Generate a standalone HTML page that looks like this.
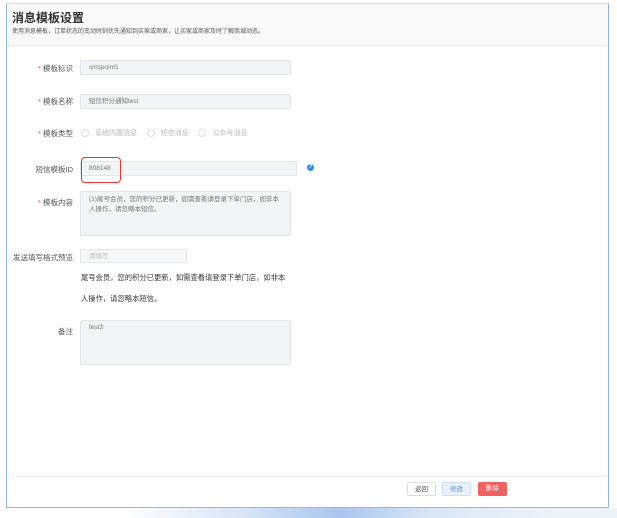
<!DOCTYPE html><html><head><meta charset="utf-8"><style>
body{margin:0;width:617px;height:518px;background:#fff;position:relative;overflow:hidden;font-family:"Liberation Sans","Noto Sans CJK SC",sans-serif;color:#333}
.a{position:absolute}
.frame{left:6px;top:3px;width:601px;height:503px;border:1.5px solid #8fb6e6;border-top:1px solid #cfe0f3}
.hdr{left:7px;top:4px;width:601px;height:41px;background:#fafafa;border-bottom:1px solid #eee}
.lbl{font-size:7.5px;color:#555;text-align:right;width:73px;left:0}
.lbl i{color:#e55;font-style:normal}
.in{background:#f3f4f6;border:1px solid #e3e5ea;border-radius:2px;font-size:6.5px;color:#777;box-sizing:border-box;padding:0 0 0 8px}
.btn{top:482px;height:14px;width:29px;font-size:6.5px;text-align:center;line-height:14px;border-radius:2px;box-sizing:border-box}
.r{display:inline-block;width:6px;height:6px;border:1px solid #ddd;border-radius:50%;vertical-align:middle;margin-right:6px}
</style></head><body>
<div class="a" style="left:0;top:508px;width:617px;height:10px;background:linear-gradient(90deg,#fff 20%,#d6e4f6 40%,#a9c6ee 55%,#dbe7f6 70%,#eef3fa 90%)"></div>
<div class="a frame"></div>
<div class="a hdr"></div>
<div class="a" style="left:12px;top:9px;font-size:12px;font-weight:bold;color:#333">消息模板设置</div>
<div class="a" style="left:12px;top:26px;font-size:6px;color:#555">使用消息模板，订单状态的变动时刻优先通知到买家或商家，让买家或商家及时了解商城动态。</div>

<div class="a lbl" style="top:63px"><i>* </i>模板标识</div>
<div class="a in" style="left:80px;top:60px;width:211px;height:15px;line-height:14px">smspoint1</div>
<div class="a lbl" style="top:96px"><i>* </i>模板名称</div>
<div class="a in" style="left:80px;top:94px;width:211px;height:15px;line-height:14px">短信积分通知test</div>
<div class="a lbl" style="top:128px"><i>* </i>模板类型</div>
<div class="a" style="left:81px;top:128px;font-size:7px;color:#bbb"><span class="r"></span>系统内置消息&nbsp;&nbsp;&nbsp;&nbsp;&nbsp;<span class="r"></span>短信消息&nbsp;&nbsp;&nbsp;&nbsp;&nbsp;<span class="r"></span>公众号消息</div>
<div class="a lbl" style="top:164px">短信模板ID</div>
<div class="a in" style="left:80px;top:161px;width:217px;height:15px;line-height:14px">808148</div>
<div class="a" style="left:81px;top:157px;width:38px;height:24px;border:1px solid #e33;border-radius:4px"></div>
<div class="a" style="left:307px;top:164px;width:7px;height:7px;border-radius:50%;background:#2d8cf0;color:#fff;font-size:6px;line-height:7px;text-align:center;font-weight:bold">?</div>
<div class="a lbl" style="top:197px"><i>* </i>模板内容</div>
<div class="a in" style="left:80px;top:191px;width:211px;height:45px;padding:3px 8px;line-height:10px;font-size:6.5px">(1)尾号会员，您的积分已更新，如需查看请登录下单门店，如非本人操作，请忽略本短信。</div>
<div class="a" style="left:13px;top:252px;font-size:7.5px;color:#555">发送填写格式预览</div>
<div class="a in" style="left:80px;top:249px;width:107px;height:14px;line-height:13px;color:#bbb;background:#f6f7f8">请填写</div>
<div class="a" style="left:81px;top:267px;font-size:7.3px;color:#333;width:206px;line-height:21px">尾号会员，您的积分已更新，如需查看请登录下单门店，如非本人操作，请忽略本短信。</div>
<div class="a lbl" style="top:326px">备注</div>
<div class="a in" style="left:80px;top:320px;width:211px;height:45px;padding:3px 8px">test3</div>
<div class="a" style="left:12px;top:476px;width:595px;height:1px;background:#eee"></div>
<div class="a btn" style="left:407px;border:1px solid #ddd;color:#555">返回</div>
<div class="a btn" style="left:442px;background:#e8f1fc;border:1px solid #cfe0f5;color:#5a8fd6">修改</div>
<div class="a btn" style="left:478px;background:#f06262;color:#fff">删除</div>
</body></html>
